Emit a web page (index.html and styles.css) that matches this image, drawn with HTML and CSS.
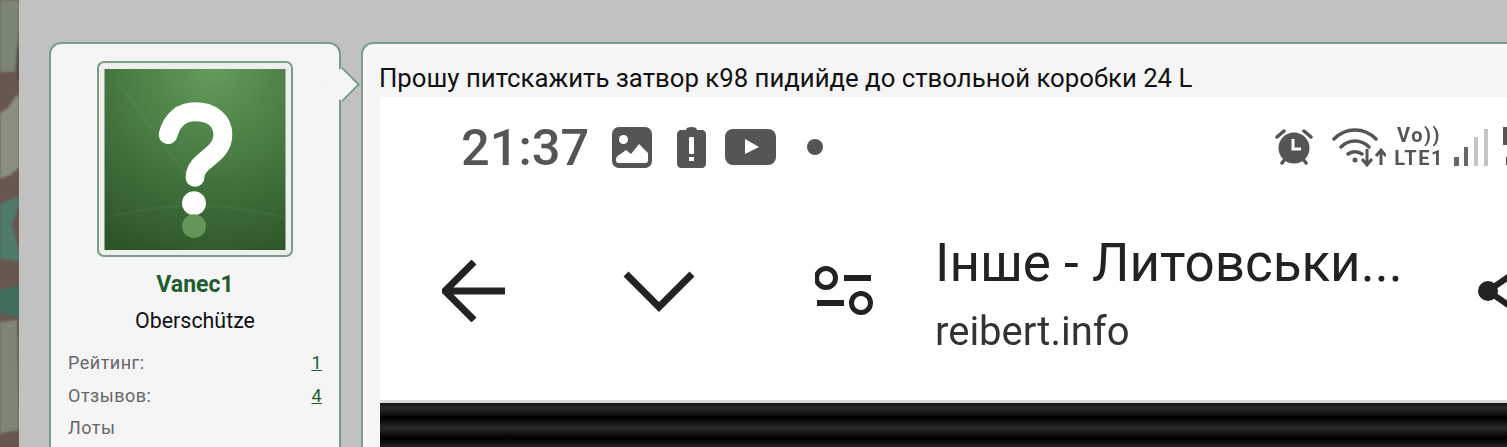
FILE: index.html
```html
<!DOCTYPE html>
<html lang="ru">
<head>
  <meta charset="UTF-8">
  <title>Затвор к98</title>
  <link rel="stylesheet" href="styles.css">
</head>
<body>
  <div class="camo">
    <svg width="19" height="447" viewBox="0 0 19 447">
      <rect width="19" height="447" fill="#68574f"/>
      <polygon points="-3,-3 22,-3 17,50 15,72 -3,72" fill="#7b8576"/>
      <polygon points="-3,115 8,108 16,96 22,96 22,165 10,175 -3,180" fill="#8a8f81"/>
      <polygon points="-3,205 22,195 12,225 22,262 -3,258" fill="#4f7b69"/>
      <polygon points="-3,290 22,285 22,318 -3,312" fill="#3f6e5b"/>
      <polygon points="-3,322 17,320 19,430 -3,434" fill="#7e8577"/>
      <rect x="17" y="50" width="2" height="30" fill="#4c453f"/>
    </svg>
  </div>

  <div class="page">
    <div class="post">
      <div class="user">
        <span class="arrow"></span>
        <div class="avatar">
          <svg width="182" height="181" viewBox="0 0 182 182">
            <defs>
              <radialGradient id="ava" cx="0.6" cy="0" r="1.1">
                <stop offset="0" stop-color="#639c5b"/>
                <stop offset="0.5" stop-color="#467840"/>
                <stop offset="1" stop-color="#2c5527"/>
              </radialGradient>
            </defs>
            <rect width="182" height="182" fill="url(#ava)"/>
            <path d="M15 15L85 110M0 150Q90 125 182 150" stroke="#fff" stroke-opacity="0.03" stroke-width="3" fill="none"/>
            <path d="M64 66C68 50 78 43 91 43C108 43 119 52 119 66C119 80 108 86 100 93C94 98 91 103 91 109" fill="none" stroke="#fff" stroke-width="19" stroke-linecap="round"/>
            <circle cx="90" cy="135" r="12" fill="#fff"/>
            <circle cx="90" cy="158" r="12" fill="#639658"/>
          </svg>
        </div>
        <div class="name">Vanec1</div>
        <div class="rank">Oberschütze</div>
        <div class="stat"><span>Рейтинг:</span><a href="#">1</a></div>
        <div class="stat"><span>Отзывов:</span><a href="#">4</a></div>
        <div class="stat"><span>Лоты</span></div>
      </div>

      <div class="message">
        <div class="text">Прошу питскажить затвор к98 пидийде до ствольной коробки 24 L</div>
        <div class="shot">
          <div class="shot-head">
            <div class="status">
              <span class="clock">21:37</span>
              <svg class="st-photo" width="40" height="41" viewBox="0 0 40 41">
                <rect width="40" height="41" rx="7" fill="#555"/>
                <circle cx="11.500" cy="12.500" r="4.500" fill="#fff"/>
                <path d="M4 33C4 29 7 28 10 26L14 23L19 27L27 17L36 26V33C36 35 35 36 33 36H7C5 36 4 35 4 33Z" fill="#fff"/>
              </svg>
              <svg class="st-batt" width="29" height="41" viewBox="0 0 29 41">
                <path d="M9 3C9 1 11 0 14.500 0C18 0 20 1 20 3H25C27 3 29 5 29 7V37C29 39 27 41 25 41H4C2 41 0 39 0 37V7C0 5 2 3 4 3Z" fill="#555"/>
                <rect x="12" y="10" width="5" height="17" rx="1" fill="#fff"/>
                <rect x="12" y="30" width="5" height="4" fill="#fff"/>
              </svg>
              <svg class="st-yt" width="51" height="36" viewBox="0 0 51 36">
                <rect width="51" height="36" rx="8" fill="#555"/>
                <polygon points="20,10 34,18 20,25" fill="#fff"/>
              </svg>
              <span class="st-dot"></span>
              <svg class="st-alarm" width="38" height="38" viewBox="0 0 38 38">
                <circle cx="19" cy="20" r="15.500" fill="#555"/>
                <path d="M2 9L9 3M36 9L29 3M7 35L10 31M31 35L28 31" stroke="#555" stroke-width="3.500" stroke-linecap="round"/>
                <path d="M18 11V21H26" fill="none" stroke="#fff" stroke-width="3"/>
              </svg>
              <svg class="st-wifi" width="54" height="40" viewBox="0 0 54 40">
                <path d="M2 11C14 -1 32 -1 44 11M9 19C17 11 29 11 37 19M16 26C20 23 26 23 30 26" fill="none" stroke="#555" stroke-width="3.500" stroke-linecap="round"/>
                <circle cx="23" cy="32" r="2.500" fill="#555"/>
                <path d="M35 21V36M30 31L35 37L40 31" fill="none" stroke="#555" stroke-width="3"/>
                <path d="M49 37V23M44 28L49 22L54 28" fill="none" stroke="#555" stroke-width="3"/>
              </svg>
              <div class="st-net"><span>Vo))</span><span>LTE1</span></div>
              <svg class="st-signal" width="34" height="38" viewBox="0 0 34 38">
                <rect x="0" y="28" width="5" height="9" fill="#666"/>
                <rect x="10" y="18" width="4" height="19" fill="#666"/>
                <rect x="20" y="8" width="4" height="29" fill="#c4c4c4"/>
                <rect x="30" y="0" width="4" height="37" fill="#c4c4c4"/>
              </svg>
              <svg class="st-cut" width="6" height="40" viewBox="0 0 6 40">
                <rect width="5" height="18" fill="#555"/>
                <rect x="3" y="30" width="3" height="8" fill="#555"/>
              </svg>
            </div>
            <div class="toolbar">
              <svg class="tb-back" width="64" height="62" viewBox="0 0 64 62">
                <path d="M32 2L3 31L32 60M3 31H63" fill="none" stroke="#222" stroke-width="7"/>
              </svg>
              <svg class="tb-down" width="72" height="42" viewBox="0 0 72 42">
                <path d="M3 4L36 37L69 4" fill="none" stroke="#222" stroke-width="7"/>
              </svg>
              <svg class="tb-tune" width="58" height="52" viewBox="0 0 58 52">
                <circle cx="11" cy="13" r="9.500" fill="none" stroke="#222" stroke-width="5"/>
                <path d="M29 13H56M2 38H29" stroke="#222" stroke-width="6"/>
                <circle cx="46" cy="38" r="9.500" fill="none" stroke="#222" stroke-width="5"/>
              </svg>
              <div class="page-title">
                <div class="pt-main">Інше - Литовськи...</div>
                <div class="pt-sub">reibert.info</div>
              </div>
              <svg class="tb-share" width="50" height="60" viewBox="0 0 50 60">
                <circle cx="11" cy="30" r="10" fill="#222"/>
                <path d="M11 30L40 10M11 30L40 50" stroke="#222" stroke-width="6"/>
              </svg>
            </div>
          </div>
          <div class="shot-dark"></div>
        </div>
      </div>
    </div>
  </div>
</body>
</html>
```

FILE: styles.css
```css
html, body {
  margin: 0;
  height: 447px;
  overflow: hidden;
}
body {
  display: flex;
  font-family: Roboto, "Liberation Sans", sans-serif;
  background: #c1c1c1;
}
.camo {
  flex: 0 0 19px;
  height: 447px;
  overflow: hidden;
  background: #68574f;
}
.camo svg {
  display: block;
  filter: blur(1px);
}
.page {
  flex: 1;
  min-width: 0;
  padding: 42px 0 0 30px;
  background: #c1c1c1;
  overflow: hidden;
}
.post {
  display: flex;
  gap: 20px;
  width: 1500px;
}

/* user card */
.user {
  position: relative;
  flex: 0 0 292px;
  box-sizing: border-box;
  height: 520px;
  padding: 17px 17px 0;
  background: #f5f5f5;
  border: 2px solid #7b9d86;
  border-radius: 12px;
}
.arrow {
  position: absolute;
  top: 28px;
  right: -16px;
  width: 25px;
  height: 25px;
  box-sizing: border-box;
  background: #f5f5f5;
  border-top: 2px solid #7b9d86;
  border-right: 2px solid #7b9d86;
  transform: rotate(45deg);
}
.avatar {
  width: 182px;
  height: 181px;
  margin: 0 auto;
  padding: 6px 5px 5px;
  background: #eee;
  border: 2px solid #7b9d86;
  border-radius: 7px;
}
.avatar svg {
  display: block;
  filter: blur(0.5px);
}
.name {
  margin-top: 14px;
  font-size: 23px;
  line-height: 27px;
  font-weight: 700;
  text-align: center;
  color: #1f5c2e;
}
.rank {
  margin-top: 10px;
  margin-bottom: 13px;
  font-size: 21.4px;
  line-height: 26px;
  text-align: center;
  color: #111;
}
.stat {
  display: flex;
  justify-content: space-between;
  height: 32.5px;
  font-size: 18px;
  line-height: 32px;
  color: #666;
  letter-spacing: 0.5px;
}
.stat a {
  color: #1f5c2e;
}

/* message */
.message {
  flex: 0 0 1300px;
  box-sizing: border-box;
  height: 520px;
  padding: 18px 17px 0;
  background: #f5f5f5;
  border: 2px solid #7b9d86;
  border-radius: 12px;
  box-shadow: inset 0 0 0 3px #fafafa;
}
.text {
  height: 35px;
  margin-left: -1px;
  font-size: 25.75px;
  line-height: 33px;
  color: #111;
  white-space: nowrap;
}
.shot {
  width: 1200px;
  filter: blur(0.5px);
}
.shot-head {
  height: 303px;
  background: #fff;
  border-bottom: 3px solid #ddd;
}
.shot-dark {
  height: 120px;
  background: repeating-linear-gradient(180deg, #151515 0, #2a2a2a 5px, #000 15px, #151515 20px);
}

/* phone status bar */
.status {
  display: flex;
  align-items: center;
  height: 100px;
  padding-left: 81px;
}
.clock {
  width: 127px;
  font-size: 50.5px;
  font-weight: 500;
  color: #555;
  white-space: nowrap;
}
.st-photo { margin-left: 24px; }
.st-batt { margin-left: 25px; }
.st-yt { margin-left: 19px; }
.st-dot {
  flex: none;
  width: 16px;
  height: 16px;
  margin-left: 31px;
  border-radius: 50%;
  background: #555;
}
.st-alarm { margin-left: 452px; }
.st-wifi { margin-left: 19px; margin-top: 2px; }
.st-net {
  display: flex;
  flex-direction: column;
  align-items: center;
  width: 50px;
  margin-left: 8px;
  font-size: 20px;
  font-weight: 700;
  line-height: 23.500px;
  letter-spacing: 1.5px;
  color: #555;
}
.st-signal { margin-left: 10px; margin-top: 2px; }
.st-cut { margin-left: 15px; flex: none; }
.status svg {
  flex: none;
}

/* phone toolbar */
.toolbar {
  display: flex;
  align-items: center;
  height: 94px;
  margin-top: 47px;
  padding-left: 62px;
}
.toolbar svg {
  flex: none;
}
.tb-down { margin-left: 117px; }
.tb-tune { margin-left: 120px; }
.page-title {
  flex: none;
  width: 464px;
  margin-left: 62px;
  padding-top: 7px;
  color: #222;
}
.pt-main {
  font-size: 53px;
  line-height: 58px;
  white-space: nowrap;
}
.pt-sub {
  margin-top: 17px;
  font-size: 40px;
  line-height: 46px;
  color: #333;
}
.tb-share { margin-left: 78px; }
```
